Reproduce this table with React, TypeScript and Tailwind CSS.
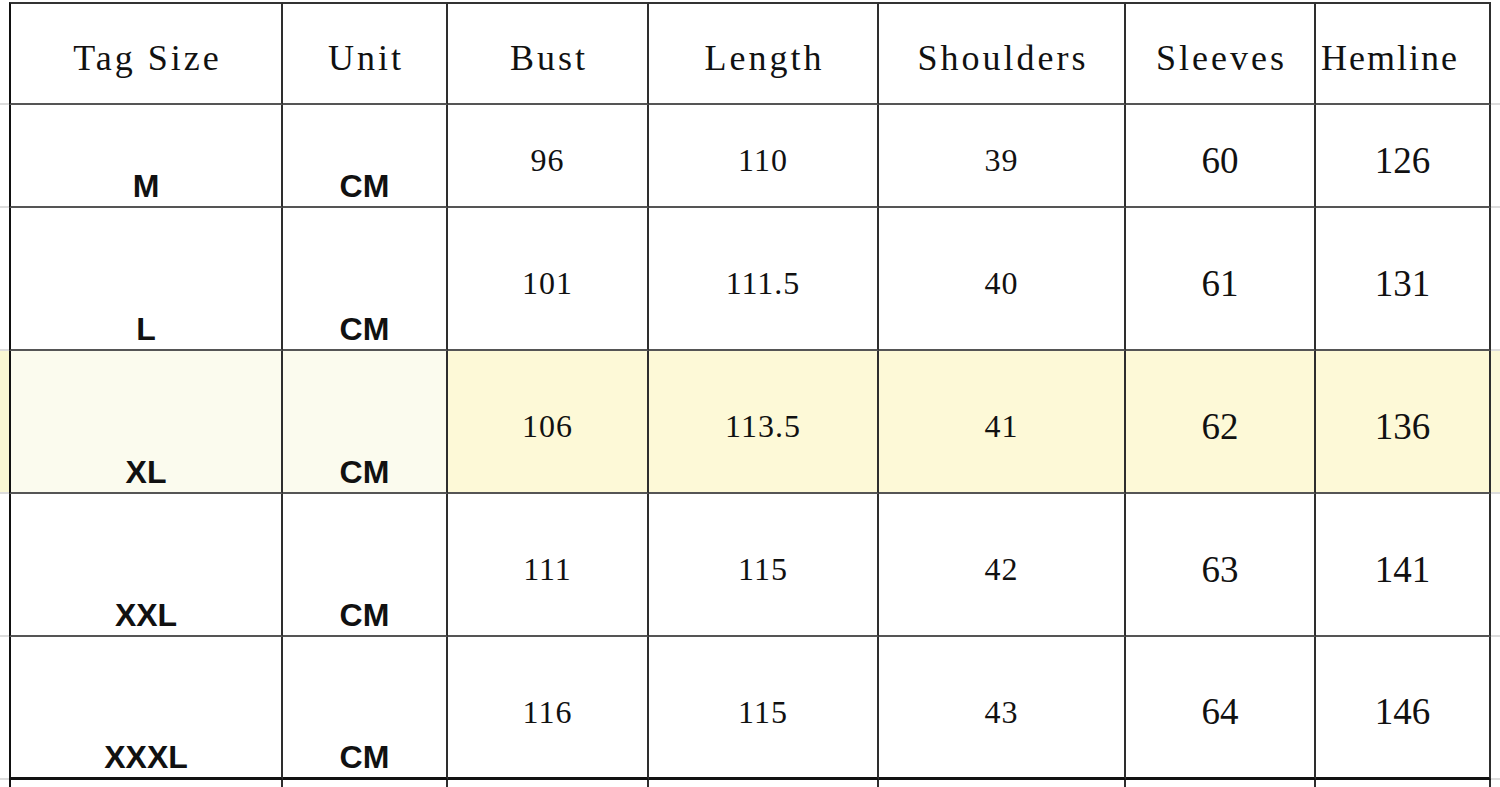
const widths = ['w-[274px]', 'w-[165px]', 'w-[201px]', 'w-[230px]', 'w-[247px]', 'w-[190px]', 'w-[175px]'];

const headers = ['Tag Size', 'Unit', 'Bust', 'Length', 'Shoulders', 'Sleeves', 'Hemline'];

const rows = [
  { tag: 'M', vals: ['96', '110', '39', '60', '126'], h: 'h-[103px]' },
  { tag: 'L', vals: ['101', '111.5', '40', '61', '131'], h: 'h-[143px]' },
  { tag: 'XL', vals: ['106', '113.5', '41', '62', '136'], h: 'h-[143px]', hl: true },
  { tag: 'XXL', vals: ['111', '115', '42', '63', '141'], h: 'h-[143px]' },
  { tag: 'XXXL', vals: ['116', '115', '43', '64', '146'], h: 'h-[143px]', last: true },
];

const cellBase = 'shrink-0 border-r-2 border-r-[#2e2e2e]';

const App = () => {
  return (
    <div className="w-[1500px] h-[787px] overflow-hidden bg-white text-[#111]">
      <div className="pt-[2px]">
        {/* header row */}
        <div className="flex h-[103px]">
          <div className="w-[9px] shrink-0 border-b-2 border-b-[#dcdcdc]" />
          {headers.map((t, i) => (
            <div
              key={t}
              className={`${cellBase} ${widths[i]} ${i === 0 ? 'border-l-2 border-l-[#111]' : ''} border-t-2 border-t-[#333] border-b-2 border-b-[#555] flex items-center pt-[9px] ${i === 6 ? 'justify-start pl-[5px]' : 'justify-center pl-[3px]'}`}
            >
              <span
                className={`font-['Liberation_Serif',serif] text-[36px] leading-none whitespace-nowrap ${i === 6 ? 'tracking-[2px]' : 'tracking-[3px]'}`}
              >
                {t}
              </span>
            </div>
          ))}
          <div className="flex-1 border-b-2 border-b-[#dcdcdc]" />
        </div>

        {rows.map((r) => {
          const yl = r.hl ? 'bg-[#fdf9d7]' : 'bg-white';
          const ylSoft = r.hl ? 'bg-[#fbfbee]' : 'bg-white';
          const bottom = r.last ? 'border-b-[3px] border-b-[#111]' : 'border-b-2 border-b-[#555]';
          return (
            <div key={r.tag} className={`flex ${r.h}`}>
              <div className={`w-[9px] shrink-0 border-b-2 border-b-[#dcdcdc] ${r.hl ? 'bg-[#f9f7d3]' : ''}`} />
              <div className={`${cellBase} ${widths[0]} border-l-2 border-l-[#111] ${bottom} ${ylSoft} flex items-end justify-center pb-[4px]`}>
                <span className="font-['Liberation_Sans',Arial,sans-serif] font-bold text-[32px] leading-none">{r.tag}</span>
              </div>
              <div className={`${cellBase} ${widths[1]} ${bottom} ${ylSoft} flex items-end justify-center pb-[4px]`}>
                <span className="font-['Liberation_Sans',Arial,sans-serif] font-bold text-[32px] leading-none">CM</span>
              </div>
              {r.vals.map((v, i) => (
                <div
                  key={i}
                  className={`${cellBase} ${widths[i + 2]} ${bottom} ${yl} flex items-center justify-center pt-[9px]`}
                >
                  {i < 3 ? (
                    <span className="font-['Liberation_Serif',serif] text-[32px] leading-none tracking-[1px]">{v}</span>
                  ) : (
                    <span className="font-['Liberation_Serif',serif] text-[37px] leading-none">{v}</span>
                  )}
                </div>
              ))}
              <div className={`flex-1 border-b-2 border-b-[#dcdcdc] ${r.hl ? 'bg-[#fbf8d8]' : ''}`} />
            </div>
          );
        })}

        {/* start of the next (cut off) row */}
        <div className="flex h-[20px]">
          <div className="w-[9px] shrink-0" />
          {widths.map((w, i) => (
            <div key={w} className={`${cellBase} ${w} ${i === 0 ? 'border-l-2 border-l-[#111]' : ''}`} />
          ))}
          <div className="flex-1" />
        </div>
      </div>
    </div>
  );
};

export default App;
